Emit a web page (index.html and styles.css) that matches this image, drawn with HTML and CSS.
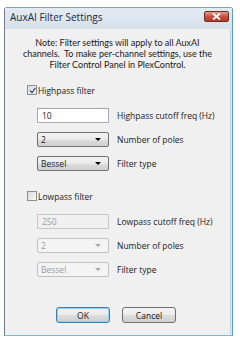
FILE: index.html
```html
<!DOCTYPE html>
<html>
<head>
<meta charset="utf-8">
<link rel="stylesheet" href="styles.css">
</head>
<body>
<div class="window">
  <div class="titlebar">
    <span class="title">AuxAI Filter Settings</span>
    <span class="close"><svg width="9" height="7" viewBox="0 0 9 7"><path d="M1 0.5 L8 6.5 M8 0.5 L1 6.5" stroke="#fff" stroke-width="1.8"/></svg></span>
  </div>
  <div class="client">
    <p class="note">Note: Filter settings will apply to all AuxAI<br>channels.&nbsp; To make per-channel settings, use the<br>Filter Control Panel in PlexControl.</p>

    <label class="check"><span class="box checked"><svg width="7" height="7" viewBox="0 0 7 7"><path d="M1 3.5 L3 5.8 L6.3 0.8" stroke="#3b4f8a" stroke-width="1.3" fill="none"/></svg></span>Highpass filter</label>
    <div class="group">
      <div class="row"><span class="field edit">10</span><span class="lbl">Highpass cutoff freq (Hz)</span></div>
      <div class="row"><span class="field combo">2<i class="arrow"></i></span><span class="lbl">Number of poles</span></div>
      <div class="row"><span class="field combo">Bessel<i class="arrow"></i></span><span class="lbl">Filter type</span></div>
    </div>

    <label class="check low"><span class="box"></span>Lowpass filter</label>
    <div class="group">
      <div class="row"><span class="field edit disabled">250</span><span class="lbl">Lowpass cutoff freq (Hz)</span></div>
      <div class="row"><span class="field combo disabled">2<i class="arrow"></i></span><span class="lbl">Number of poles</span></div>
      <div class="row"><span class="field combo disabled">Bessel<i class="arrow"></i></span><span class="lbl">Filter type</span></div>
    </div>

    <div class="buttons">
      <span class="btn default">OK</span>
      <span class="btn">Cancel</span>
    </div>
  </div>
</div>
</body>
</html>
```
FILE: styles.css
```css
html, body {
  margin: 0;
  padding: 0;
  background: #ffffff;
}
body {
  font-family: "Open Sans", "Noto Sans", sans-serif;
  font-size: 8.5px;
  color: #1a1a1a;
}
.window {
  margin: 7px 0 0 4px;
  width: 229px;
  height: 329px;
  box-sizing: border-box;
  border-left: 1px solid #6f7c88;
  border-top: 1px solid #8a9aaa;
  border-right: 1px solid #5a9cc4;
  border-bottom: 1px solid #7ab8d8;
  background: #dbe4ee;
  display: flex;
  flex-direction: column;
  border-radius: 3px 3px 0 0;
}
.titlebar {
  height: 21px;
  display: flex;
  align-items: center;
  justify-content: space-between;
  padding: 0 3px 0 5px;
  background: linear-gradient(#e3eaf2, #d7e1ec);
}
.title {
  font-size: 10px;
  color: #1e2a36;
  position: relative;
  top: -2px;
}
.close {
  width: 23px;
  height: 9px;
  margin-top: -4px;
  border: 1px solid #6e2b24;
  border-radius: 2px;
  background: linear-gradient(#e2a092, #c9503f 50%, #b83a28);
  display: flex;
  align-items: center;
  justify-content: center;
}
.client {
  flex: 1;
  background: #f0f0f0;
  margin: 0 1px 0 0;
  border-right: 1px solid #c6d8e6;
  display: flex;
  flex-direction: column;
}
.note {
  margin: 8px 0 0 0;
  text-align: center;
  line-height: 11px;
  font-family: "Lato", "Open Sans", sans-serif;
  font-size: 9px;
}
.check {
  display: flex;
  align-items: center;
  margin: 15px 0 0 22px;
  height: 10px;
}
.check.low {
  margin-top: 20px;
}
.box {
  width: 8px;
  height: 8px;
  border: 1px solid #8e8f8f;
  background: linear-gradient(135deg, #dcdcdc, #f6f6f6);
  margin-right: 1px;
  display: flex;
  align-items: center;
  justify-content: center;
}
.group {
  display: flex;
  flex-direction: column;
  gap: 9px;
  margin: 13px 0 0 32px;
}
.row {
  display: flex;
  align-items: center;
  height: 15px;
}
.field {
  width: 72px;
  height: 15px;
  box-sizing: border-box;
  display: flex;
  align-items: center;
  padding-left: 4px;
  position: relative;
}
.edit {
  background: #ffffff;
  border: 1px solid #abadb3;
  border-top-color: #a2a6ae;
}
.combo {
  border: 1px solid #707070;
  border-radius: 2px;
  background: linear-gradient(#f2f2f2, #ebebeb 50%, #dddddd 51%, #cfcfcf);
  padding-left: 3px;
}
.arrow {
  position: absolute;
  right: 7px;
  top: 5px;
  width: 0;
  height: 0;
  border-left: 3px solid transparent;
  border-right: 3px solid transparent;
  border-top: 3px solid #000;
}
.disabled {
  color: #9c9c9c;
}
.edit.disabled {
  background: #f0f0f0;
  border-color: #c8c8c8;
}
.combo.disabled {
  background: #f4f4f4;
  border-color: #c0c0c0;
}
.combo.disabled .arrow {
  border-top-color: #a8a8a8;
}
.lbl {
  margin-left: 8px;
}
.buttons {
  display: flex;
  justify-content: center;
  gap: 12px;
  margin-top: 30px;
  padding-right: 3px;
}
.btn {
  width: 54px;
  height: 16px;
  box-sizing: border-box;
  border: 1px solid #707070;
  border-radius: 3px;
  background: linear-gradient(#f2f2f2, #ebebeb 50%, #dddddd 51%, #cfcfcf);
  display: flex;
  align-items: center;
  justify-content: center;
}
.btn.default {
  border-color: #3c7fb1;
  box-shadow: inset 0 0 0 1px #92d0f4;
}
```
